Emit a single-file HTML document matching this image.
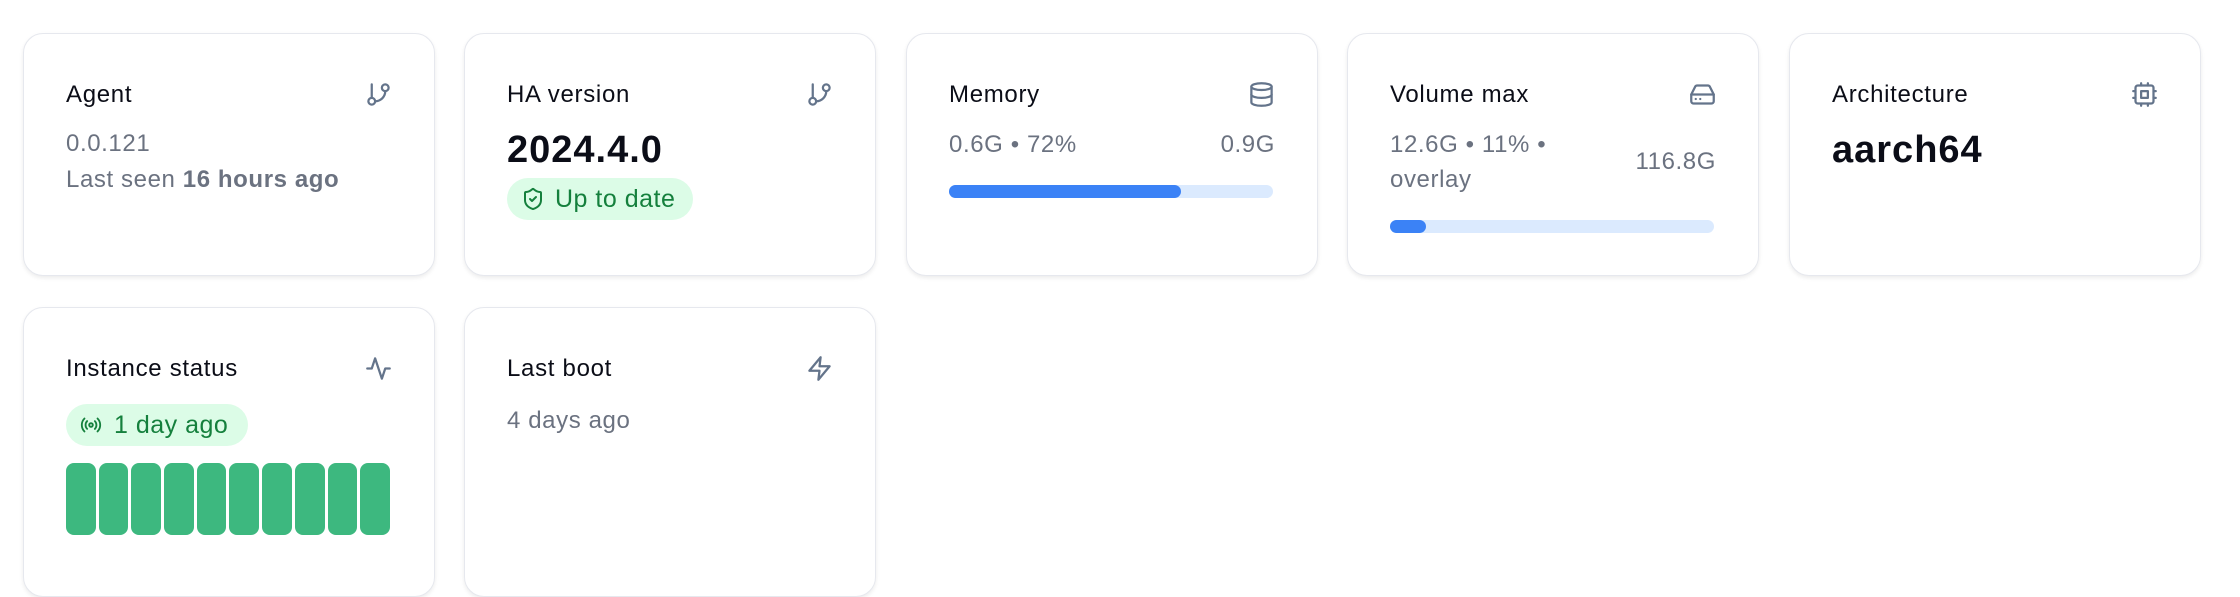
<!DOCTYPE html>
<html><head><meta charset="utf-8"><style>
*{box-sizing:border-box;margin:0;padding:0}
body{width:2240px;height:580px;background:#fff;font-family:"Liberation Sans",sans-serif;position:relative;overflow:hidden}
.card{position:absolute;width:412px;height:243px;border:1.5px solid #e6e8ee;border-radius:20px;background:#fff;box-shadow:0 2px 4px rgba(0,0,0,.08)}
.t{position:absolute;left:42px;top:48px;font-size:24px;line-height:26px;color:#0b0d17;letter-spacing:0.7px}
.ic{position:absolute;right:42px;top:47px;width:27px;height:27px}
.g{position:absolute;left:42px;font-size:24px;line-height:26px;color:#6b7280;letter-spacing:0.6px}
.big{position:absolute;left:42px;top:95px;font-size:38px;line-height:42px;font-weight:bold;color:#0b0d17;letter-spacing:1px}
.badge{position:absolute;left:42px;height:42px;border-radius:21px;background:#dcfce7;color:#15803d;font-size:25px;letter-spacing:0.5px;display:flex;align-items:center;padding:0 18px 0 14px;gap:10px}
.track{position:absolute;left:42px;width:324px;height:13px;border-radius:7px;background:#dbeafe}
.fill{height:100%;border-radius:7px;background:#3b82f6}
.bars{position:absolute;left:42px;top:463px;display:flex;gap:3px}
.bars div{width:29.7px;height:72px;border-radius:8px;background:#3db87f}
</style></head><body>
<svg width="0" height="0" style="position:absolute"><defs>
<g id="br" fill="none" stroke="#64748b" stroke-width="2" stroke-linecap="round" stroke-linejoin="round"><line x1="6" y1="3" x2="6" y2="15"/><circle cx="18" cy="6" r="3"/><circle cx="6" cy="18" r="3"/><path d="M18 9a9 9 0 0 1-9 9"/></g>
</defs></svg>

<div class="card" style="left:23px;top:33px">
<div class="t">Agent</div>
<svg class="ic" viewBox="0 0 24 24"><use href="#br"/></svg>
<div class="g" style="top:97px">0.0.121</div>
<div class="g" style="top:133px">Last seen <b>16 hours ago</b></div>
</div>

<div class="card" style="left:464px;top:33px">
<div class="t">HA version</div>
<svg class="ic" viewBox="0 0 24 24"><use href="#br"/></svg>
<div class="big">2024.4.0</div>
<div class="badge" style="top:144px"><svg width="24" height="24" viewBox="0 0 24 24" fill="none" stroke="#15803d" stroke-width="2" stroke-linecap="round" stroke-linejoin="round"><path d="M20 13c0 5-3.5 7.5-7.66 8.95a1 1 0 0 1-.67-.01C7.5 20.5 4 18 4 13V6a1 1 0 0 1 1-1c2 0 4.5-1.2 6.24-2.72a1.17 1.17 0 0 1 1.52 0C14.51 3.81 17 5 19 5a1 1 0 0 1 1 1z"/><path d="m9 12 2 2 4-4"/></svg>Up to date</div>
</div>

<div class="card" style="left:906px;top:33px">
<div class="t">Memory</div>
<svg class="ic" viewBox="0 0 24 24" fill="none" stroke="#64748b" stroke-width="2" stroke-linecap="round" stroke-linejoin="round"><ellipse cx="12" cy="5" rx="9" ry="3"/><path d="M3 5v14a9 3 0 0 0 18 0V5"/><path d="M3 12a9 3 0 0 0 18 0"/></svg>
<div class="g" style="top:98px">0.6G • 72%</div>
<div class="g" style="top:98px;left:auto;right:42px">0.9G</div>
<div class="track" style="top:151px"><div class="fill" style="width:232px"></div></div>
</div>

<div class="card" style="left:1347px;top:33px">
<div class="t">Volume max</div>
<svg class="ic" viewBox="0 0 24 24" fill="none" stroke="#64748b" stroke-width="2" stroke-linecap="round" stroke-linejoin="round"><line x1="22" y1="12" x2="2" y2="12"/><path d="M5.45 5.11 2 12v6a2 2 0 0 0 2 2h16a2 2 0 0 0 2-2v-6l-3.45-6.89A2 2 0 0 0 16.76 4H7.24a2 2 0 0 0-1.79 1.11z"/><line x1="6" y1="16" x2="6.01" y2="16"/><line x1="10" y1="16" x2="10.01" y2="16"/></svg>
<div class="g" style="top:98px">12.6G • 11% •</div>
<div class="g" style="top:133px">overlay</div>
<div class="g" style="top:115px;left:auto;right:42px">116.8G</div>
<div class="track" style="top:186px"><div class="fill" style="width:36px"></div></div>
</div>

<div class="card" style="left:1789px;top:33px">
<div class="t">Architecture</div>
<svg class="ic" viewBox="0 0 24 24" fill="none" stroke="#64748b" stroke-width="2" stroke-linecap="round" stroke-linejoin="round"><rect x="4" y="4" width="16" height="16" rx="2"/><rect x="9" y="9" width="6" height="6"/><path d="M15 2v2M15 20v2M2 15h2M2 9h2M20 15h2M20 9h2M9 2v2M9 20v2"/></svg>
<div class="big">aarch64</div>
</div>

<div class="card" style="left:23px;top:307px;height:290px">
<div class="t">Instance status</div>
<svg class="ic" viewBox="0 0 24 24" fill="none" stroke="#64748b" stroke-width="2" stroke-linecap="round" stroke-linejoin="round"><path d="M22 12h-4l-3 9L9 3l-3 9H2"/></svg>
<div class="badge" style="top:96px;padding:0 20px 0 12px;gap:10px"><svg width="26" height="22" viewBox="0 0 24 24" fill="none" stroke="#15803d" stroke-width="2" stroke-linecap="round" stroke-linejoin="round"><path d="M4.9 19.1C1 15.2 1 8.8 4.9 4.9"/><path d="M7.8 16.2c-2.3-2.3-2.3-6.1 0-8.5"/><circle cx="12" cy="12" r="2"/><path d="M16.2 7.8c2.3 2.3 2.3 6.1 0 8.5"/><path d="M19.1 4.9C23 8.8 23 15.1 19.1 19"/></svg>1 day ago</div>
</div>
<div class="bars" style="left:66px"><div></div><div></div><div></div><div></div><div></div><div></div><div></div><div></div><div></div><div></div></div>

<div class="card" style="left:464px;top:307px;height:290px">
<div class="t">Last boot</div>
<svg class="ic" viewBox="0 0 24 24" fill="none" stroke="#64748b" stroke-width="2" stroke-linecap="round" stroke-linejoin="round"><path d="M13 2 3 14h9l-1 8 10-12h-9l1-8z"/></svg>
<div class="g" style="top:100px">4 days ago</div>
</div>
</body></html>
